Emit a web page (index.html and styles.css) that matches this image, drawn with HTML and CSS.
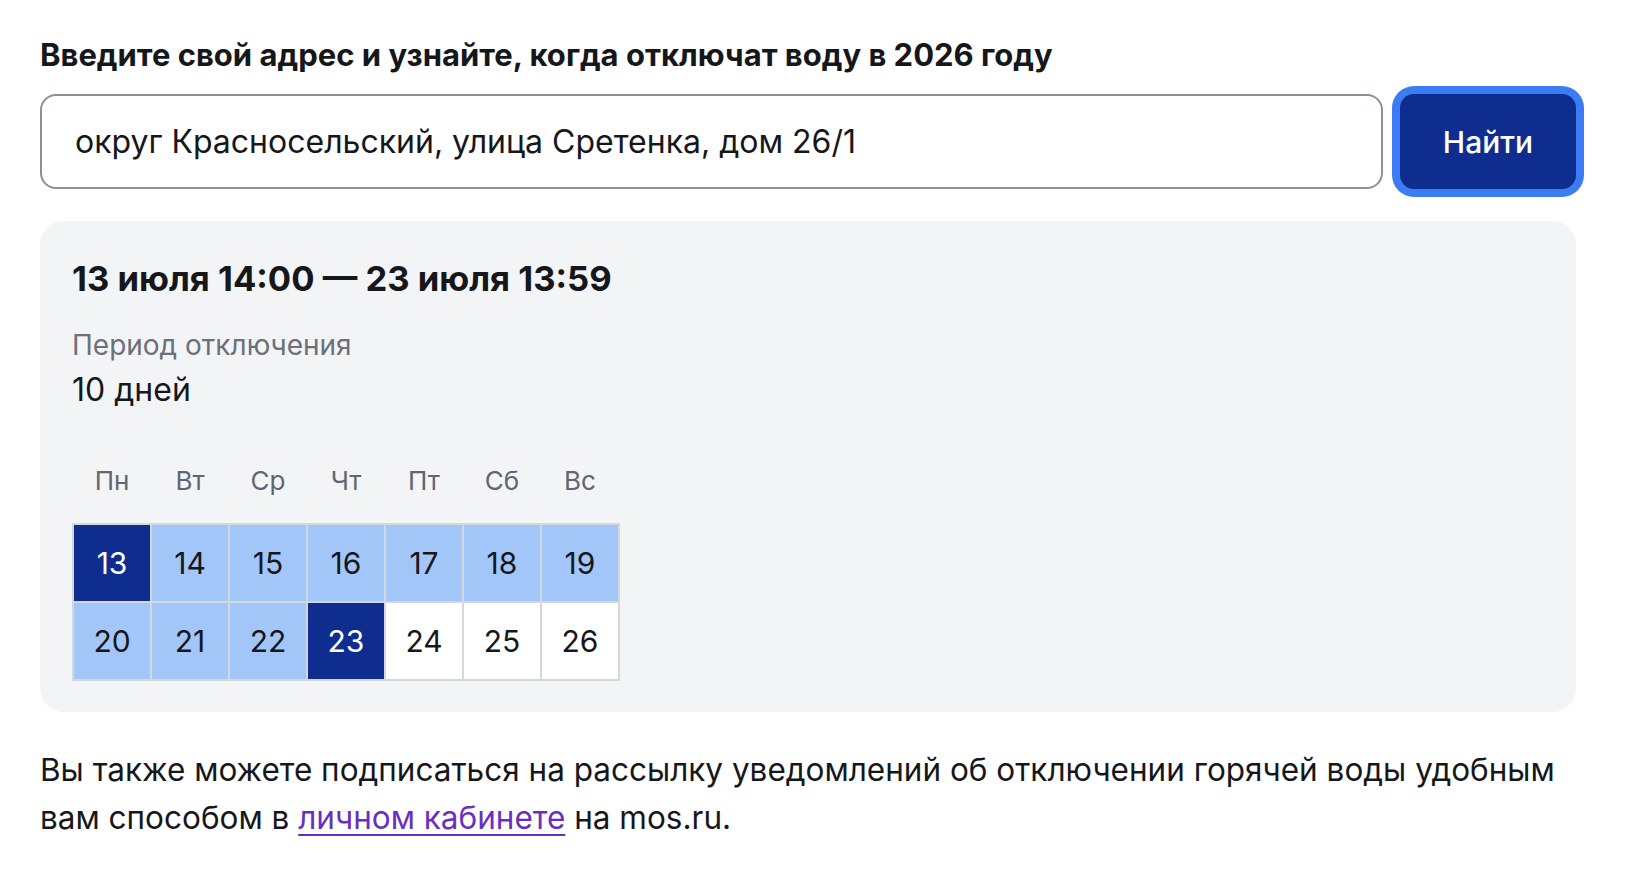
FILE: index.html
```html
<!DOCTYPE html>
<html lang="ru">
<head>
<meta charset="utf-8">
<title>Отключение горячей воды</title>
<link rel="stylesheet" href="styles.css">
</head>
<body>
<main class="page">
  <h1 class="title">Введите свой адрес и узнайте, когда отключат воду в 2026 году</h1>
  <form class="search">
    <div class="field">округ Красносельский, улица Сретенка, дом 26/1</div>
    <button class="btn" type="button">Найти</button>
  </form>
  <section class="card">
    <h2 class="period">13 июля 14:00 — 23 июля 13:59</h2>
    <div class="label">Период отключения</div>
    <div class="value">10 дней</div>
    <div class="weekdays">
      <span>Пн</span><span>Вт</span><span>Ср</span><span>Чт</span><span>Пт</span><span>Сб</span><span>Вс</span>
    </div>
    <div class="cal">
      <div class="day edge">13</div>
      <div class="day on">14</div>
      <div class="day on">15</div>
      <div class="day on">16</div>
      <div class="day on">17</div>
      <div class="day on">18</div>
      <div class="day on">19</div>
      <div class="day on">20</div>
      <div class="day on">21</div>
      <div class="day on">22</div>
      <div class="day edge">23</div>
      <div class="day">24</div>
      <div class="day">25</div>
      <div class="day">26</div>
    </div>
  </section>
  <p class="note">Вы также можете подписаться на рассылку уведомлений об отключении горячей воды удобным вам способом в <a href="#">личном кабинете</a> на mos.ru.</p>
</main>
</body>
</html>
```

FILE: styles.css
```css
* { box-sizing: border-box; }
html, body { margin: 0; background: #fff; }
body {
  font-family: Inter, "Noto Sans", "Liberation Sans", sans-serif;
  color: #16171b;
}
.page {
  width: 1576px;
  padding-left: 40px;
}
.title {
  margin: 0;
  padding-top: 35px;
  font-size: 31px;
  line-height: 40px;
  font-weight: 700;
}
.search {
  display: flex;
  gap: 17px;
  margin-top: 19px;
  height: 95px;
}
.field {
  flex: 1;
  display: flex;
  align-items: center;
  border: 2px solid #8a919c;
  border-radius: 16px;
  padding: 0 33px;
  font-size: 32px;
  color: #16171b;
}
.btn {
  width: 176px;
  border: 0;
  border-radius: 14px;
  background: #0f2d8f;
  color: #fff;
  font-family: inherit;
  font-size: 30px;
  font-weight: 500;
  box-shadow: 0 0 0 8px #3c7cf3;
}
.card {
  margin-top: 32px;
  height: 491px;
  background: #f3f4f6;
  border-radius: 24px;
  padding: 35px 32px 0 32px;
}
.period {
  margin: 0;
  font-size: 34.6px;
  line-height: 44px;
  font-weight: 700;
}
.label {
  margin-top: 28px;
  font-size: 28px;
  line-height: 34px;
  color: #6b7079;
}
.value {
  margin-top: 10px;
  font-size: 32px;
  line-height: 36px;
}
.weekdays {
  margin-top: 55px;
  display: grid;
  grid-template-columns: repeat(7, 76px);
  column-gap: 2px;
  padding-left: 2px;
  font-size: 26px;
  line-height: 36px;
  color: #5f6670;
  text-align: center;
}
.cal {
  margin-top: 24px;
  display: grid;
  grid-template-columns: repeat(7, 76px);
  grid-auto-rows: 76px;
  gap: 2px;
  padding: 2px;
  width: 548px;
  background: #d4d8de;
}
.day {
  display: flex;
  align-items: center;
  justify-content: center;
  background: #fff;
  font-size: 30px;
  color: #16171b;
}
.day.on { background: #a3c6f8; }
.day.edge { background: #0f2d8f; color: #fff; }
.note {
  margin: 34px 0 0 0;
  font-size: 31.5px;
  line-height: 48px;
}
.note a {
  color: #6a2fc2;
  text-decoration: underline;
  text-underline-offset: 5px;
  text-decoration-thickness: 2px;
}
```
